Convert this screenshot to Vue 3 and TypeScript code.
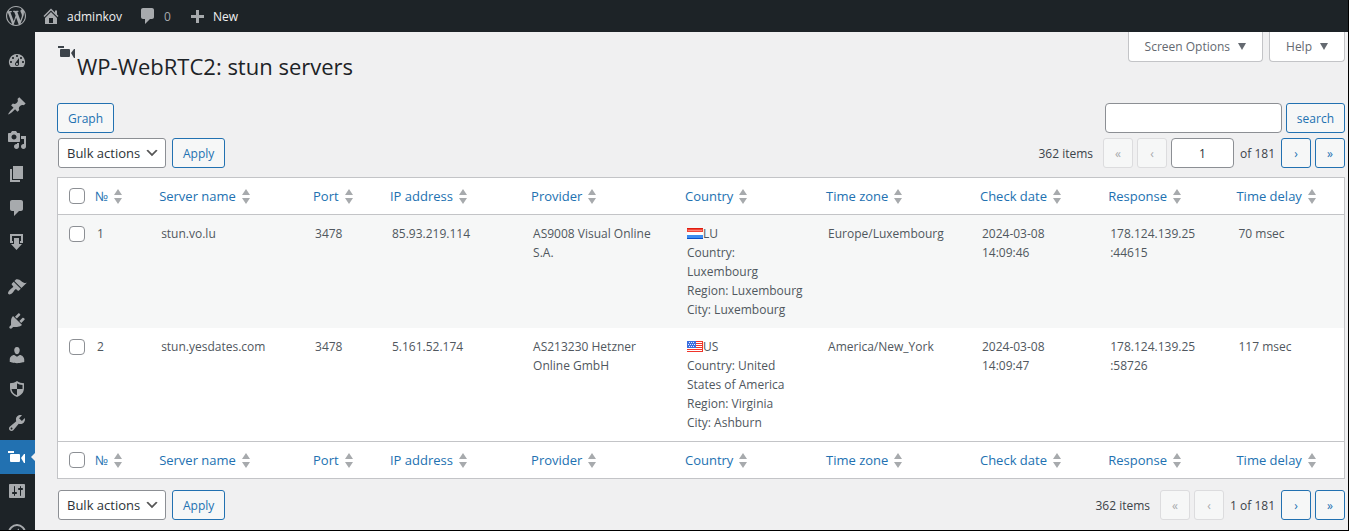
<script setup lang="ts">
import { ref } from 'vue'

interface MenuItem {
  label: string
  paths: string[]
  gapBefore?: boolean
  current?: boolean
}

interface Column {
  key: string
  label: string
}

interface ServerRow {
  id: number
  name: string
  port: string
  ip: string
  provider: string[]
  flag: 'lu' | 'us'
  code: string
  place: string[]
  zone: string
  checked: string[]
  response: string[]
  delay: string
}

const camera = [
  'M1 4h6v2H1z',
  'M4 7h8q1 0 1 1v6q0 1-1 1H4q-1 0-1-1V8q0-1 1-1z',
  'M14 11L17 7h1v9h-1z',
]

const menu: MenuItem[] = [
  { label: 'Dashboard', paths: ['M3.76 16h12.48A7.998 7.998 0 0 0 10 3a7.998 7.998 0 0 0-6.24 13zM10 4c.55 0 1 .45 1 1s-.45 1-1 1-1-.45-1-1 .45-1 1-1zM6 6c.55 0 1 .45 1 1s-.45 1-1 1-1-.45-1-1 .45-1 1-1zm8 0c.55 0 1 .45 1 1s-.45 1-1 1-1-.45-1-1 .45-1 1-1zm-5.37 5.55L12 7v6c0 1.1-.9 2-2 2s-2-.9-2-2c0-.57.24-1.08.63-1.45zM4 10c.55 0 1 .45 1 1s-.45 1-1 1-1-.45-1-1 .45-1 1-1zm12 0c.55 0 1 .45 1 1s-.45 1-1 1-1-.45-1-1 .45-1 1-1zm-5 3c0-.55-.45-1-1-1s-1 .45-1 1 .45 1 1 1 1-.45 1-1z'] },
  { label: 'Posts', gapBefore: true, paths: ['M10.44 3.02l1.82-1.82 6.36 6.35-1.83 1.82c-1.05-.68-2.48-.57-3.41.36l-.75.75c-.92.93-1.04 2.35-.35 3.41l-1.83 1.82-2.41-2.41-2.8 2.79c-.42.42-3.38 2.71-3.8 2.29s1.86-3.39 2.28-3.81l2.79-2.79L4.1 9.36l1.83-1.82c1.05.69 2.48.57 3.4-.36l.75-.75c.93-.92 1.05-2.35.36-3.41z'] },
  { label: 'Media', paths: ['M13 11V4c0-.55-.45-1-1-1h-1.67L9 1H5L3.67 3H2c-.55 0-1 .45-1 1v7c0 .55.45 1 1 1h10c.55 0 1-.45 1-1zM7 4.5c1.38 0 2.5 1.12 2.5 2.5S8.38 9.5 7 9.5 4.5 8.38 4.5 7 5.62 4.5 7 4.5zM14 6h5v10.5c0 1.38-1.12 2.5-2.5 2.5S14 17.88 14 16.5s1.12-2.5 2.5-2.5c.17 0 .34.02.5.05V9h-3V6zm-4 8.05V13h2v3.5c0 1.38-1.12 2.5-2.5 2.5S7 17.88 7 16.5 8.12 14 9.5 14c.17 0 .34.02.5.05z'] },
  { label: 'Pages', paths: ['M6 15V2h10v13H6zm-1 1h8v2H3V5h2v11z'] },
  { label: 'Comments', paths: ['M5 2h9c1.1 0 2 .9 2 2v7c0 1.1-.9 2-2 2h-2l-5 5v-5H5c-1.1 0-2-.9-2-2V4c0-1.1.9-2 2-2z'] },
  { label: 'Downloads', paths: ['M3 2h13v9h-3V9h1V4H5v5h1v2H3z', 'M7 6h5v6h3l-5.500 6L4 12h3z'] },
  { label: 'Appearance', gapBefore: true, paths: ['M14.48 11.06L7.41 3.99l1.5-1.5c.5-.56 2.3-.47 3.51.32 1.21.8 1.43 1.28 2.91 2.1 1.18.64 2.45 1.26 4.45.85zm-.71.71L6.7 4.7 4.93 6.47c-.39.39-.39 1.02 0 1.41l1.06 1.06c.39.39.39 1.03 0 1.42-.6.6-1.43 1.11-2.21 1.69-.35.26-.7.53-1.01.84C1.43 14.23.4 16.08 1.4 17.07c.99 1 2.84-.03 4.18-1.36.31-.31.58-.66.85-1.02.57-.78 1.08-1.61 1.69-2.21.39-.39 1.02-.39 1.41 0l1.06 1.06c.39.39 1.02.39 1.41 0z'] },
  { label: 'Plugins', paths: ['M13.11 4.36L9.87 7.6 8 5.73l3.24-3.24c.35-.34 1.05-.2 1.56.32.52.51.66 1.21.31 1.55zm-8 1.77l.91-1.12 9.01 9.01-1.19.84c-.71.71-2.63 1.16-3.82 1.16H6.14L4.9 17.26c-.59.59-1.54.59-2.12 0-.59-.58-.59-1.53 0-2.12l1.24-1.24v-3.88c0-1.13.4-3.19 1.09-3.89zm7.26 3.97l3.24-3.24c.34-.35 1.04-.21 1.55.31.52.51.66 1.21.31 1.55l-3.24 3.25z'] },
  { label: 'Users', paths: ['M10 9.250c-2.270 0-2.730-3.440-2.730-3.440C7 4.020 7.820 2 9.970 2c2.160 0 2.980 2.020 2.710 3.810 0 0-.410 3.440-2.680 3.440zm0 2.570L12.720 10c2.390 0 4.520 2.330 4.520 4.530v2.490s-3.650 1.130-7.240 1.130c-3.650 0-7.240-1.130-7.240-1.130v-2.490c0-2.250 1.940-4.480 4.470-4.480z'] },
  { label: 'Security', paths: ['M10 2C8 3.500 5.500 4.200 3 4.200V9c0 4.500 2.800 7.300 7 9 4.200-1.700 7-4.500 7-9V4.200C14.500 4.200 12 3.500 10 2zm0 2.200c1.600 1 3.400 1.500 5.500 1.700V10H10v6.300C6.800 14.900 4.800 13 4.500 10H10z'] },
  { label: 'Tools', paths: ['M16.68 9.77c-1.34 1.34-3.3 1.67-4.95.99l-5.41 6.52c-.99.99-2.59.99-3.58 0s-.99-2.59 0-3.57l6.52-5.42c-.68-1.65-.35-3.61.99-4.95 1.28-1.28 3.12-1.62 4.72-1.06l-2.89 2.89 2.82 2.82 2.86-2.87c.53 1.58.18 3.39-1.08 4.65zM3.81 16.21c.4.39 1.04.39 1.43 0 .4-.4.4-1.04 0-1.43-.39-.4-1.03-.4-1.43 0-.39.39-.39 1.03 0 1.43z'] },
  { label: 'WP-WebRTC2', current: true, paths: camera },
  { label: 'Settings', paths: ['M18 16V4c0-.55-.45-1-1-1H3c-.55 0-1 .45-1 1v12c0 .55.45 1 1 1h14c.55 0 1-.45 1-1zM8 11h1c.55 0 1 .45 1 1s-.45 1-1 1H8v1.500c0 .28-.22.5-.5.5s-.5-.22-.5-.5V13H6c-.55 0-1-.45-1-1s.45-1 1-1h1V5.500c0-.28.22-.5.5-.5s.5.22.5.5V11zm5-2h-1c-.55 0-1-.45-1-1s.45-1 1-1h1V5.500c0-.28.22-.5.5-.5s.5.22.5.5V7h1c.55 0 1 .45 1 1s-.45 1-1 1h-1v5.500c0 .28-.22.5-.5.5s-.5-.22-.5-.5V9z'] },
]

const columns: Column[] = [
  { key: 'num', label: '№' },
  { key: 'name', label: 'Server name' },
  { key: 'port', label: 'Port' },
  { key: 'ip', label: 'IP address' },
  { key: 'provider', label: 'Provider' },
  { key: 'country', label: 'Country' },
  { key: 'zone', label: 'Time zone' },
  { key: 'checked', label: 'Check date' },
  { key: 'response', label: 'Response' },
  { key: 'delay', label: 'Time delay' },
]

const rows: ServerRow[] = [
  {
    id: 1,
    name: 'stun.vo.lu',
    port: '3478',
    ip: '85.93.219.114',
    provider: ['AS9008 Visual Online', 'S.A.'],
    flag: 'lu',
    code: 'LU',
    place: ['Country:', 'Luxembourg', 'Region: Luxembourg', 'City: Luxembourg'],
    zone: 'Europe/Luxembourg',
    checked: ['2024-03-08', '14:09:46'],
    response: ['178.124.139.25', ':44615'],
    delay: '70 msec',
  },
  {
    id: 2,
    name: 'stun.yesdates.com',
    port: '3478',
    ip: '5.161.52.174',
    provider: ['AS213230 Hetzner', 'Online GmbH'],
    flag: 'us',
    code: 'US',
    place: ['Country: United', 'States of America', 'Region: Virginia', 'City: Ashburn'],
    zone: 'America/New_York',
    checked: ['2024-03-08', '14:09:47'],
    response: ['178.124.139.25', ':58726'],
    delay: '117 msec',
  },
]

const search = ref('')
const page = ref('1')
const selected = ref<number[]>([])
</script>

<template>
  <div class="admin">
    <header class="bar">
      <a href="#" class="bar-logo" aria-label="About WordPress">
        <svg viewBox="0 0 20 20" width="20" height="20"><path d="M20 10c0-5.51-4.49-10-10-10C4.48 0 0 4.49 0 10c0 5.52 4.48 10 10 10 5.51 0 10-4.48 10-10zM7.78 15.37L4.37 6.22c.55-.02 1.17-.08 1.17-.08.5-.06.44-1.13-.06-1.11 0 0-1.45.11-2.37.11-.18 0-.37 0-.58-.01C4.12 2.69 6.87 1.11 10 1.11c2.33 0 4.45.87 6.05 2.34-.68-.11-1.65.39-1.65 1.58 0 .74.45 1.36.9 2.1.35.61.55 1.36.55 2.46 0 1.49-1.4 5-1.4 5l-3.03-8.37c.54-.02.82-.17.82-.17.5-.05.44-1.25-.06-1.22 0 0-1.44.12-2.38.12-.87 0-2.33-.12-2.33-.12-.5-.03-.56 1.2-.06 1.22l.92.08 1.26 3.41zM17.41 10c.24-.64.74-1.87.43-4.25.7 1.29 1.05 2.71 1.05 4.25 0 3.29-1.73 6.24-4.4 7.78.97-2.59 1.94-5.2 2.92-7.78zM6.1 18.09C3.12 16.65 1.11 13.53 1.11 10c0-1.3.23-2.48.72-3.59C3.25 10.3 4.67 14.2 6.1 18.09zm4.03-6.63l2.58 6.98c-.86.29-1.76.45-2.71.45-.79 0-1.57-.11-2.29-.33.81-2.38 1.62-4.74 2.42-7.1z" /></svg>
      </a>
      <a href="#" class="bar-link bar-site">
        <svg viewBox="0 0 20 20" width="20" height="20"><path d="M16 8.5l1.53 1.53-1.06 1.06L10 4.6l-6.47 6.49-1.06-1.06L10 2.5l4 4v-2h2v4zm-6-2.46l6 5.99V18H4v-5.97zM12 17v-5H8v5h4z" /></svg>
        <span>adminkov</span>
      </a>
      <a href="#" class="bar-link bar-comments">
        <svg viewBox="0 0 20 20" width="20" height="20"><path d="M5 2h9c1.100 0 2 .9 2 2v7c0 1.100-.9 2-2 2h-2l-5 5v-5H5c-1.100 0-2-.9-2-2V4c0-1.100.9-2 2-2z" /></svg>
        <span>0</span>
      </a>
      <a href="#" class="bar-link">
        <svg viewBox="0 0 20 20" width="20" height="20"><path d="M9 4h3v5h5v3h-5v5H9v-5H4V9h5z" /></svg>
        <span>New</span>
      </a>
    </header>

    <div class="body">
      <nav class="menu" aria-label="Main menu">
        <a
          v-for="item in menu"
          :key="item.label"
          href="#"
          class="menu-item"
          :class="{ gap: item.gapBefore, current: item.current }"
          :aria-label="item.label"
        >
          <svg viewBox="0 0 20 20" width="20" height="20">
            <path v-for="(d, i) in item.paths" :key="i" :d="d" fill-rule="evenodd" />
          </svg>
        </a>
        <button type="button" class="collapse" aria-label="Collapse menu">
          <svg viewBox="0 0 20 20" width="20" height="20"><path d="M10 1a9 9 0 1 0 0 18 9 9 0 0 0 0-18zm0 2a7 7 0 1 1 0 14 7 7 0 0 1 0-14zm2 2.500L6.500 10l5.500 4.500z" fill-rule="evenodd" /></svg>
        </button>
      </nav>

      <main class="content">
        <div class="head">
          <h1 class="title">
            <svg class="title-icon" viewBox="0 0 20 20" width="20" height="20"><path v-for="(d, i) in camera" :key="i" :d="d" /></svg>
            <span>WP-WebRTC2: stun servers</span>
          </h1>
          <div class="screen-links">
            <button type="button" class="screen-link">
              Screen Options
              <svg viewBox="0 0 8 7" width="8" height="7"><path d="M0 0h8L4 7z" /></svg>
            </button>
            <button type="button" class="screen-link">
              Help
              <svg viewBox="0 0 8 7" width="8" height="7"><path d="M0 0h8L4 7z" /></svg>
            </button>
          </div>
        </div>

        <div class="tools">
          <button type="button" class="btn">Graph</button>
          <form class="search" role="search" @submit.prevent>
            <input v-model="search" class="field search-field" type="search" aria-label="Search servers" />
            <button type="submit" class="btn">search</button>
          </form>
        </div>

        <div class="tablenav">
          <div class="bulk">
            <select class="bulk-select" aria-label="Select bulk action">
              <option>Bulk actions</option>
            </select>
            <button type="button" class="btn">Apply</button>
          </div>
          <div class="pages">
            <span class="count">362 items</span>
            <button type="button" class="btn step" disabled aria-label="First page">«</button>
            <button type="button" class="btn step" disabled aria-label="Previous page">‹</button>
            <input v-model="page" class="field page-field" type="text" aria-label="Current page" />
            <span class="of">of 181</span>
            <button type="button" class="btn step" aria-label="Next page">›</button>
            <button type="button" class="btn step" aria-label="Last page">»</button>
          </div>
        </div>

        <table class="servers">
          <colgroup>
            <col class="w-check" />
            <col v-for="c in columns" :key="c.key" :class="'w-' + c.key" />
          </colgroup>
          <thead>
            <tr>
              <td class="pick"><input type="checkbox" class="tick" aria-label="Select all" /></td>
              <th v-for="c in columns" :key="c.key" scope="col">
                <a href="#" class="sort">
                  <span>{{ c.label }}</span>
                  <svg viewBox="0 0 8 15" width="8" height="15"><path d="M4 0l4 6H0zM0 9h8l-4 6z" /></svg>
                </a>
              </th>
            </tr>
          </thead>
          <tbody>
            <tr v-for="r in rows" :key="r.id">
              <td class="pick">
                <input v-model="selected" type="checkbox" class="tick" :value="r.id" :aria-label="'Select ' + r.name" />
              </td>
              <td>{{ r.id }}</td>
              <td>{{ r.name }}</td>
              <td>{{ r.port }}</td>
              <td>{{ r.ip }}</td>
              <td><div v-for="l in r.provider" :key="l">{{ l }}</div></td>
              <td>
                <div class="country">
                  <svg v-if="r.flag === 'lu'" viewBox="0 0 16 11" width="16" height="11">
                    <path fill="#fff" d="M0 0h16v11H0z" />
                    <path fill="#f0473a" d="M0 0h16v4H0z" />
                    <path fill="#e01c10" d="M0 0h16v1H0z" />
                    <path fill="#f9877c" d="M1 2h14v1H1z" />
                    <path fill="#3b8df0" d="M0 7h16v4H0z" />
                    <path fill="#0a50c8" d="M0 10h16v1H0z" />
                  </svg>
                  <svg v-else viewBox="0 0 16 11" width="16" height="11">
                    <path fill="#fff" d="M0 0h16v11H0z" />
                    <path fill="#f0352b" d="M0 0h16v1H0zM8 2h8v1H8zM8 4h8v1H8zM8 6h8v1H8zM0 8h16v1H0zM0 10h16v1H0zM15 0h1v11h-1z" />
                    <path fill="#3b6fe0" d="M0 0h9v7H0z" />
                    <path fill="#dfe9ff" d="M2 1h1v1H2zM4 1h1v1H4zM6 1h1v1H6zM1 3h1v1H1zM3 3h1v1H3zM5 3h1v1H5zM7 3h1v1H7zM2 5h1v1H2zM4 5h1v1H4zM6 5h1v1H6z" />
                  </svg>
                  <span>{{ r.code }}</span>
                </div>
                <div v-for="l in r.place" :key="l">{{ l }}</div>
              </td>
              <td>{{ r.zone }}</td>
              <td><div v-for="l in r.checked" :key="l">{{ l }}</div></td>
              <td><div v-for="l in r.response" :key="l">{{ l }}</div></td>
              <td>{{ r.delay }}</td>
            </tr>
          </tbody>
          <tfoot>
            <tr>
              <td class="pick"><input type="checkbox" class="tick" aria-label="Select all" /></td>
              <th v-for="c in columns" :key="c.key" scope="col">
                <a href="#" class="sort">
                  <span>{{ c.label }}</span>
                  <svg viewBox="0 0 8 15" width="8" height="15"><path d="M4 0l4 6H0zM0 9h8l-4 6z" /></svg>
                </a>
              </th>
            </tr>
          </tfoot>
        </table>

        <div class="tablenav bottom">
          <div class="bulk">
            <select class="bulk-select" aria-label="Select bulk action">
              <option>Bulk actions</option>
            </select>
            <button type="button" class="btn">Apply</button>
          </div>
          <div class="pages">
            <span class="count">362 items</span>
            <button type="button" class="btn step" disabled aria-label="First page">«</button>
            <button type="button" class="btn step" disabled aria-label="Previous page">‹</button>
            <span class="of">1 of 181</span>
            <button type="button" class="btn step" aria-label="Next page">›</button>
            <button type="button" class="btn step" aria-label="Last page">»</button>
          </div>
        </div>
      </main>
    </div>
  </div>
</template>

<style>
body {
  background: #f0f0f1;
}
</style>

<style scoped>
* {
  box-sizing: border-box;
}

.admin {
  display: flex;
  flex-direction: column;
  height: 100vh;
  overflow: hidden;
  border: solid #000;
  border-width: 0 1px 1px 0;
  background: #f0f0f1;
  color: #3c434a;
  font-family: "Segoe UI", "Open Sans", "Noto Sans", sans-serif;
  font-size: 12px;
}

svg {
  display: block;
  flex: none;
  fill: currentColor;
}

a {
  color: inherit;
  text-decoration: none;
}

button,
input,
select {
  margin: 0;
  font: inherit;
}

/* Top bar */
.bar {
  display: flex;
  flex: none;
  align-items: center;
  height: 32px;
  padding-left: 6px;
  background: #1d2327;
  color: #a7aaad;
  font-size: 12px;
}

.bar-link {
  display: flex;
  align-items: center;
  gap: 6px;
}

.bar-link span {
  color: #f0f0f1;
}

.bar-site {
  margin-left: 15px;
}

.bar-comments {
  margin: 0 16px;
}

.bar-link.bar-comments span {
  color: #a7aaad;
}

/* Body */
.body {
  display: flex;
  flex: 1;
  min-height: 0;
}

.menu {
  display: flex;
  flex: none;
  flex-direction: column;
  width: 35px;
  padding-top: 12px;
  overflow: hidden;
  background: #1d2327;
  color: #a7aaad;
}

.menu-item {
  display: flex;
  flex: none;
  align-items: center;
  height: 34px;
  padding-left: 7px;
}

.menu-item.gap {
  margin-top: 11px;
}

.menu-item.current {
  position: relative;
  background: #2271b1;
  color: #fff;
}

.menu-item.current::after {
  position: absolute;
  top: 13px;
  right: 0;
  border: 4px solid transparent;
  border-right-color: #f0f0f1;
  border-left-width: 0;
  content: "";
}

.collapse {
  flex: none;
  margin-top: 15px;
  padding: 0 0 0 7px;
  border: 0;
  background: none;
  color: inherit;
}

.content {
  flex: 1;
  min-width: 0;
  padding: 0 3px 0 22px;
}

.head {
  display: flex;
  justify-content: space-between;
  align-items: flex-start;
}

.title {
  display: flex;
  align-items: flex-start;
  margin: 0;
  padding-top: 10px;
  color: #1d2327;
  font-size: 22px;
  font-weight: 400;
  line-height: 30px;
}

.title span {
  padding-top: 9px;
}

.title-icon {
  color: #3c434a;
}

.screen-links {
  display: flex;
  gap: 6px;
}

.screen-link {
  display: flex;
  align-items: center;
  gap: 8px;
  height: 30px;
  padding: 0 16px;
  border: 1px solid #c3c4c7;
  border-top: 0;
  border-radius: 0 0 4px 4px;
  background: #fff;
  color: #646970;
}

.tools,
.tablenav {
  display: flex;
  justify-content: space-between;
  align-items: center;
}

.tools {
  margin-top: 22px;
}

.tablenav {
  margin: 5px 0 9px;
}

.tablenav.bottom {
  margin: 11px 0 0;
}

.search {
  display: flex;
  gap: 4px;
}

.bulk {
  display: flex;
  gap: 6px;
  padding-left: 1px;
}

.btn {
  height: 30px;
  padding: 0 10px;
  border: 1px solid #2271b1;
  border-radius: 3px;
  background: #f6f7f7;
  color: #2271b1;
}

.btn:disabled {
  border-color: #dcdcde;
  color: #a7aaad;
}

.field {
  height: 30px;
  border: 1px solid #8c8f94;
  border-radius: 4px;
  background: #fff;
  color: #2c3338;
}

.search-field {
  width: 177px;
  padding: 0 8px;
}

.bulk-select {
  width: 108px;
  height: 30px;
  padding: 0 24px 0 8px;
  border: 1px solid #8c8f94;
  border-radius: 3px;
  appearance: none;
  background: #fff url("data:image/svg+xml,%3Csvg xmlns='http://www.w3.org/2000/svg' viewBox='0 0 20 20'%3E%3Cpath d='M5 6l5 5 5-5 2 1-7 7-7-7 2-1z' fill='%23555'/%3E%3C/svg%3E") no-repeat right 5px center / 16px 16px;
  color: #2c3338;
  font-size: 13px;
}

.pages {
  display: flex;
  align-items: center;
  gap: 4px;
}

.count {
  margin-right: 6px;
}

.step {
  width: 30px;
  padding: 0;
}

.page-field {
  width: 63px;
  text-align: center;
}

.of {
  margin: 0 2px;
}

/* Table */
.servers {
  width: 100%;
  table-layout: fixed;
  border: 1px solid #c3c4c7;
  border-spacing: 0;
  background: #fff;
}

.w-check { width: 29px; }
.w-num { width: 5%; }
.w-name { width: 12%; }
.w-port { width: 6%; }
.w-ip { width: 11%; }
.w-provider { width: 12%; }
.w-country { width: 11%; }
.w-zone { width: 12%; }
.w-checked { width: 10%; }
.w-response { width: 10%; }
.w-delay { width: 9%; }

.servers th {
  padding: 0 8px;
  font-size: 13px;
  font-weight: 400;
  text-align: left;
}

.servers thead th,
.servers thead td {
  height: 37px;
  border-bottom: 1px solid #c3c4c7;
}

.servers tfoot th,
.servers tfoot td {
  height: 37px;
  border-top: 1px solid #c3c4c7;
}

.sort {
  display: flex;
  align-items: center;
  gap: 6px;
  color: #2271b1;
}

.sort svg {
  color: #a7aaad;
}

.servers tbody td {
  padding: 9px 10px;
  color: #50575e;
  line-height: 19px;
  vertical-align: top;
  white-space: nowrap;
}

.servers tbody tr:nth-child(odd) {
  background: #f6f7f7;
}

.servers .pick,
.servers tbody .pick {
  padding-right: 0;
  padding-left: 11px;
}

.servers tbody .pick {
  padding-top: 11px;
}

.country {
  display: flex;
  align-items: center;
}

.tick {
  display: block;
  width: 16px;
  height: 16px;
  border: 1px solid #8c8f94;
  border-radius: 4px;
  appearance: none;
  background: #fff;
}

.tick:checked {
  background: #2271b1;
}
</style>
